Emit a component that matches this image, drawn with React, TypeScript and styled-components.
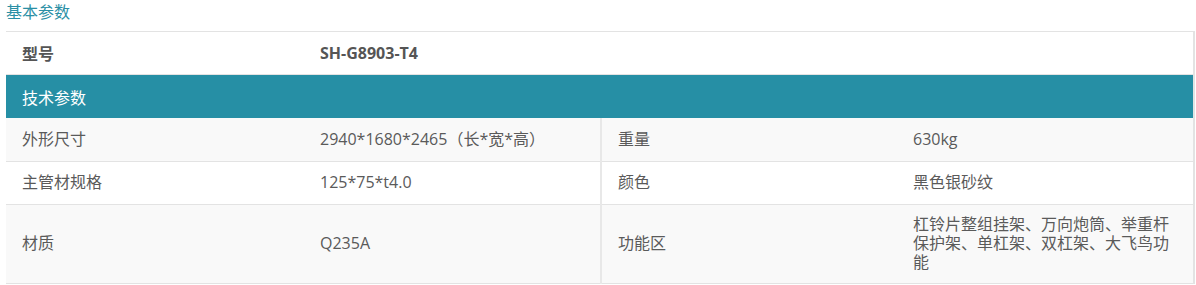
import React from 'react';
import styled, { createGlobalStyle } from 'styled-components';

type Spec = { label: string; value: string };

const specRows: Array<[Spec, Spec]> = [
	[
		{ label: '外形尺寸', value: '2940*1680*2465（长*宽*高）' },
		{ label: '重量', value: '630kg' },
	],
	[
		{ label: '主管材规格', value: '125*75*t4.0' },
		{ label: '颜色', value: '黑色银砂纹' },
	],
	[
		{ label: '材质', value: 'Q235A' },
		{ label: '功能区', value: '杠铃片整组挂架、万向炮筒、举重杆保护架、单杠架、双杠架、大飞鸟功能' },
	],
];

const App: React.FC = () => (
	<>
		<GlobalStyle />
		<Page>
			<SectionTitle>{'基本参数'}</SectionTitle>
			<SpecTable>
				<colgroup>
					<col style={{ width: 298 }} />
					<col style={{ width: 297 }} />
					<col style={{ width: 296 }} />
					<col />
				</colgroup>
				<tbody>
					<ModelRow>
						<ModelCell>{'型号'}</ModelCell>
						<ModelCell colSpan={3}>{'SH-G8903-T4'}</ModelCell>
					</ModelRow>
					<tr>
						<GroupHeader colSpan={4}>{'技术参数'}</GroupHeader>
					</tr>
					{specRows.map(([left, right], i) => (
						<SpecRow key={left.label} $striped={i % 2 === 0} $tall={i === 2}>
							<Cell>{left.label}</Cell>
							<Cell>{left.value}</Cell>
							<Cell $divider>{right.label}</Cell>
							<Cell>{right.value}</Cell>
						</SpecRow>
					))}
				</tbody>
			</SpecTable>
		</Page>
	</>
);

const GlobalStyle = createGlobalStyle`
	body {
		margin: 0;
		background: #fff;
		font-family: "Open Sans", "Noto Sans CJK SC", sans-serif;
	}
`;

const Page = styled.div`
	padding: 0 1px 0 6px;
`;

const SectionTitle = styled.div`
	height: 31px;
	font-size: 16px;
	line-height: 25px;
	color: #2a8fa5;
`;

const SpecTable = styled.table`
	width: 1189px;
	border-collapse: collapse;
	table-layout: fixed;
	border-top: 1px solid #e3e3e3;
	border-right: 2px solid #e3e3e3;
	font-size: 16px;
	color: #5a5a5a;
`;

const ModelRow = styled.tr`
	height: 43px;
	background: #fff;
`;

const ModelCell = styled.td`
	padding: 0 16px;
	font-weight: bold;
	color: #555;
	border-bottom: 1px solid #e3e3e3;
`;

const GroupHeader = styled.td`
	height: 43px;
	padding: 0 16px;
	background: #268fa5;
	color: #fff;
`;

const SpecRow = styled.tr<{ $striped: boolean; $tall: boolean }>`
	height: ${p => p.$tall ? 79 : 43}px;
	background: ${p => p.$striped ? '#f9f9f9' : '#fff'};
`;

const Cell = styled.td<{ $divider?: boolean }>`
	padding: 0 16px;
	line-height: 19px;
	border-bottom: 1px solid #e3e3e3;
	border-left: ${p => p.$divider ? '2px solid #e8e8e8' : 'none'};
	word-break: break-all;
`;

export default App;
